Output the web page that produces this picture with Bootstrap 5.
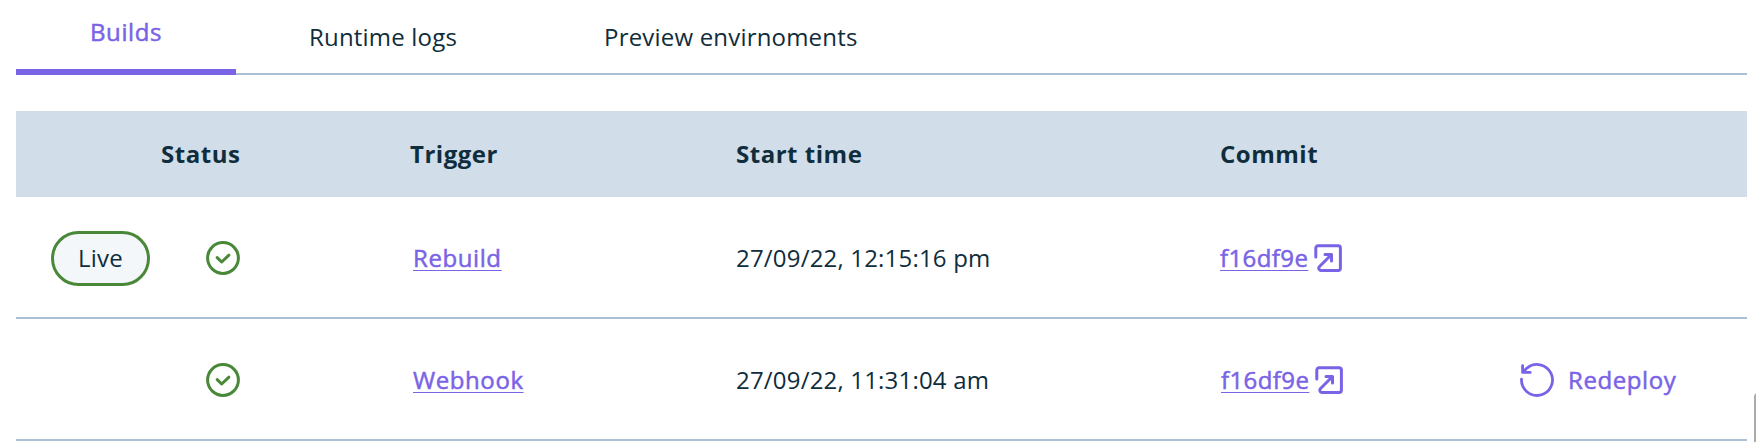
<!DOCTYPE html>
<html lang="en">
<head>
<meta charset="utf-8">
<meta name="viewport" content="width=device-width, initial-scale=1">
<title>Builds</title>
<link href="https://cdn.jsdelivr.net/npm/bootstrap@5.3.0/dist/css/bootstrap.min.css" rel="stylesheet">
<style>
:root { --ink: #0f2d3c; --violet: #7a63e6; --line: #abc0d5; --green: #4a8839; }
body { font-family: "Open Sans", "Noto Sans", sans-serif; font-size: 24px; line-height: 32px; letter-spacing: .19px; color: var(--ink); background: #fff; overflow: hidden; }
.page { width: 1731px; margin-left: 16px; }
.build-tabs { height: 75px; border-bottom: 2px solid var(--line); }
.build-tabs .nav-link { height: 75px; padding: 21px 74px 0 73px; color: var(--ink); white-space: nowrap; }
.build-tabs .nav-link.active { width: 220px; padding: 16px 0 0 74px; border-bottom: 6px solid var(--violet); }
.build-tabs .nav-link.active, .build-link, .redeploy { color: var(--violet); -webkit-text-stroke: .5px var(--violet); letter-spacing: .58px; }
.build-table { table-layout: fixed; margin-top: 36px; --bs-table-bg: transparent; }
.build-table th, .build-table td { padding: 0; vertical-align: middle; color: var(--ink); }
.build-table thead th { height: 86px; background: #d1dde8; border: 0; font-weight: 700; letter-spacing: .52px; }
.build-table tbody td { height: 122px; padding-top: 1px; border-bottom: 2px solid var(--line); }
.build-table tbody tr:first-child td { height: 121px; padding-top: 2px; }
.build-table .status-head { padding-left: 145px; }
.status-slot { width: 155px; margin-left: 35px; }
.live-pill { width: 99px; height: 55px; border: 3px solid var(--green); background: #f3f7fa; }
.c-status { width: 394px; } .c-trigger { width: 326px; } .c-time { width: 484px; } .c-commit { width: 300px; }
.build-link { text-decoration: underline; text-decoration-thickness: 1px; text-underline-offset: 3px; }
.trigger-link { margin-left: 3px; }
.commit { gap: 6px; color: var(--violet); }
.commit .build-link { letter-spacing: .4px; }
.commit-shift { margin-left: 1px; }
.redeploy { font-size: 24px; line-height: 32px; gap: 14px; }
svg { display: block; fill: none; stroke: currentColor; stroke-linecap: round; stroke-linejoin: round; flex: none; }
.ok-icon { color: var(--green); }
.scroll-thumb { position: fixed; right: -6px; top: 393px; width: 8px; height: 80px; border-radius: 4px; background: #aaa; }
</style>
</head>
<body>
<main class="page">
  <nav class="nav build-tabs flex-nowrap">
    <a class="nav-link active" href="#">Builds</a>
    <a class="nav-link" href="#">Runtime logs</a>
    <a class="nav-link" href="#">Preview envirnoments</a>
  </nav>
  <table class="table build-table mb-0">
    <colgroup><col class="c-status"><col class="c-trigger"><col class="c-time"><col class="c-commit"><col></colgroup>
    <thead>
      <tr><th class="status-head">Status</th><th>Trigger</th><th>Start time</th><th>Commit</th><th></th></tr>
    </thead>
    <tbody>
      <tr>
        <td><div class="d-flex align-items-center">
          <div class="status-slot"><span class="live-pill rounded-pill d-flex align-items-center justify-content-center">Live</span></div>
          <svg class="ok-icon" width="34" height="34" viewBox="0 0 34 34" stroke-width="3"><circle cx="17" cy="17" r="15.4"/><path d="M11.2 16.600l4.500 4.400 7.200-6.800"/></svg>
        </div></td>
        <td><a class="build-link trigger-link" href="#">Rebuild</a></td>
        <td>27/09/22, 12:15:16 pm</td>
        <td><div class="commit d-flex align-items-center"><a class="build-link" href="#">f16df9e</a>
          <svg width="28" height="28" viewBox="0 0 28 28" stroke-width="3"><path d="M1.800 13V4a2.200 2.200 0 0 1 2.200-2.200h20.200a2.200 2.200 0 0 1 2.200 2.200v20.200a2.200 2.200 0 0 1-2.200 2.200H6.800a2.200 2.200 0 0 1-1.500-3.600L17.500 10.500M11 10.500h6.500v6.500"/></svg>
        </div></td>
        <td></td>
      </tr>
      <tr>
        <td><div class="d-flex align-items-center">
          <div class="status-slot"></div>
          <svg class="ok-icon" width="34" height="34" viewBox="0 0 34 34" stroke-width="3"><circle cx="17" cy="17" r="15.4"/><path d="M11.2 16.600l4.500 4.400 7.200-6.800"/></svg>
        </div></td>
        <td><a class="build-link trigger-link" href="#">Webhook</a></td>
        <td>27/09/22, 11:31:04 am</td>
        <td><div class="commit commit-shift d-flex align-items-center"><a class="build-link" href="#">f16df9e</a>
          <svg width="28" height="28" viewBox="0 0 28 28" stroke-width="3"><path d="M1.800 13V4a2.200 2.200 0 0 1 2.200-2.200h20.200a2.200 2.200 0 0 1 2.200 2.200v20.200a2.200 2.200 0 0 1-2.200 2.200H6.800a2.200 2.200 0 0 1-1.500-3.600L17.500 10.500M11 10.500h6.500v6.500"/></svg>
        </div></td>
        <td><button class="btn redeploy border-0 p-0 d-flex align-items-center">
          <svg width="34" height="34" viewBox="0 0 34 34" stroke-width="2.800"><path d="M1.500 16.200A15.500 15.500 0 1 0 7 5.100L3.200 8.800M2.600 2.600v6.800h7.600"/></svg>Redeploy</button></td>
      </tr>
    </tbody>
  </table>
</main>
<div class="scroll-thumb"></div>
<script src="https://cdn.jsdelivr.net/npm/bootstrap@5.3.0/dist/js/bootstrap.bundle.min.js"></script>
</body>
</html>
